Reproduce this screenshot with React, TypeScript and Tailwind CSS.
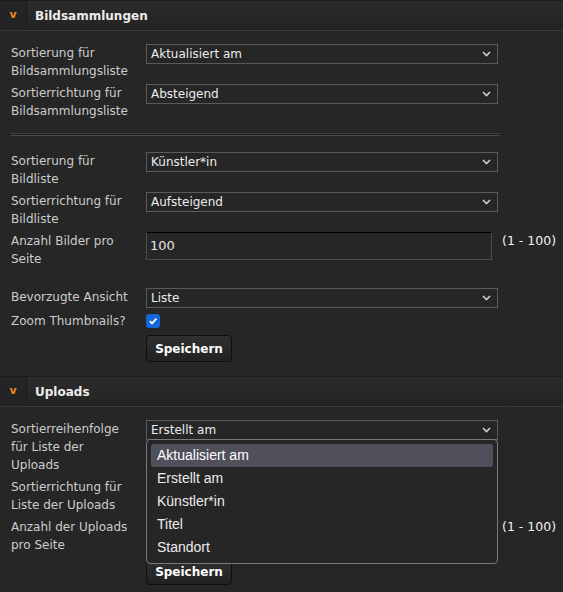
import React from 'react';

const FONT = "font-['DejaVu_Sans',Verdana,sans-serif]";

function Chevron() {
  return (
    <svg width="9" height="6" viewBox="0 0 9 6" className="shrink-0">
      <path d="M1 1l3.5 3.5L8 1" fill="none" stroke="#d0d0d0" strokeWidth="1.6" />
    </svg>
  );
}

function Header({ title }: { title: string }) {
  return (
    <div className="flex h-[31px] border-t border-b border-t-[#1c1c1c] border-b-[#3a3a3a] bg-gradient-to-b from-[#2c2c2c] to-[#232323]">
      <div className="flex w-[27px] items-center justify-center border-r border-[#1d1d1d] bg-[#242424]">
        <span className="text-[11px] font-bold text-[#f08a1e]">v</span>
      </div>
      <div className="flex items-center pl-[8px] text-[12px] font-bold text-[#ececec]">{title}</div>
    </div>
  );
}

function Select({ value, children }: { value: string; children?: React.ReactNode }) {
  return (
    <div className="relative w-[352px]">
      <div className="flex h-[20px] items-center justify-between border border-[#5a5a5a] bg-[#262626] pl-[4px] pr-[6px] text-[12px] text-[#ececec]">
        <span>{value}</span>
        <Chevron />
      </div>
      {children}
    </div>
  );
}

function Row({ label, className = '', children }: { label: string; className?: string; children: React.ReactNode }) {
  return (
    <div className={'flex items-start ' + className}>
      <div className="w-[124px] shrink-0 text-[12px] leading-[18px] text-[#cccccc]">{label}</div>
      <div className="ml-[11px] flex items-start">{children}</div>
    </div>
  );
}

function NumberInput({ value }: { value: string }) {
  return (
    <div className="flex items-start">
      <div className="flex h-[28px] w-[346px] shrink-0 items-center border border-[#4d4d4d] border-t-black bg-[#262626] pl-[3px] text-[13px] text-[#e4e4e4]">
        {value}
      </div>
      <span className="ml-[10px] whitespace-nowrap text-[12.5px] leading-[18px] text-[#f2f2f2]">(1 - 100)</span>
    </div>
  );
}

function SaveButton({ className = '' }: { className?: string }) {
  return (
    <div className={'ml-[135px] ' + className}>
      <button
        type="button"
        className="flex h-[27px] w-[86px] items-center justify-center rounded-[4px] border border-[#0e0e0e] bg-gradient-to-b from-[#303030] to-[#222222] text-[12px] font-bold text-white"
      >
        Speichern
      </button>
    </div>
  );
}

const OPTIONS = ['Aktualisiert am', 'Erstellt am', 'Künstler*in', 'Titel', 'Standort'];

export default function App() {
  return (
    <div className={'min-h-[592px] w-[563px] bg-[#262626] ' + FONT}>
      <Header title="Bildsammlungen" />
      <div className="px-[11px] pt-[13px] pb-[14px]">
        <Row label="Sortierung für Bildsammlungsliste">
          <Select value="Aktualisiert am" />
        </Row>
        <Row label="Sortierrichtung für Bildsammlungsliste" className="mt-[4px]">
          <Select value="Absteigend" />
        </Row>
        <div className="mt-[13px] mb-[16px] h-[3px] w-[489px] border-t border-b border-t-[#3e3e3e] border-b-[#4a4a4a] bg-[#1f1f1f]" />
        <Row label="Sortierung für Bildliste">
          <Select value="Künstler*in" />
        </Row>
        <Row label="Sortierrichtung für Bildliste" className="mt-[4px]">
          <Select value="Aufsteigend" />
        </Row>
        <Row label="Anzahl Bilder pro Seite" className="mt-[4px]">
          <NumberInput value="100" />
        </Row>
        <Row label="Bevorzugte Ansicht" className="mt-[20px]">
          <Select value="Liste" />
        </Row>
        <Row label="Zoom Thumbnails?" className="mt-[4px]">
          <div className="mt-[2px] flex h-[14px] w-[14px] items-center justify-center rounded-[3px] bg-[#1467d6]">
            <svg width="10" height="10" viewBox="0 0 10 10">
              <path d="M1.8 5.2l2.2 2.2L8.4 2.6" fill="none" stroke="white" strokeWidth="1.8" />
            </svg>
          </div>
        </Row>
        <SaveButton className="mt-[5px]" />
      </div>

      <Header title="Uploads" />
      <div className="px-[11px] pt-[13px] pb-[8px]">
        <Row label="Sortierreihenfolge für Liste der Uploads">
          <Select value="Erstellt am">
            <div className="absolute left-0 top-[19px] z-10 w-[352px] rounded-[4px] border border-[#7a7a7a] bg-[#262626] p-[4px] font-['Liberation_Sans',Arial,sans-serif] text-[14px]">
              {OPTIONS.map((o, i) => (
                <div
                  key={o}
                  className={
                    'flex h-[23px] items-center rounded-[3px] pl-[6px] ' +
                    (i === 0 ? 'bg-[#50505b] text-white' : 'text-[#ececec]')
                  }
                >
                  {o}
                </div>
              ))}
            </div>
          </Select>
        </Row>
        <Row label="Sortierrichtung für Liste der Uploads" className="mt-[4px]">
          <Select value="" />
        </Row>
        <Row label="Anzahl der Uploads pro Seite" className="mt-[4px]">
          <NumberInput value="" />
        </Row>
        <SaveButton className="mt-[4px]" />
      </div>
    </div>
  );
}
